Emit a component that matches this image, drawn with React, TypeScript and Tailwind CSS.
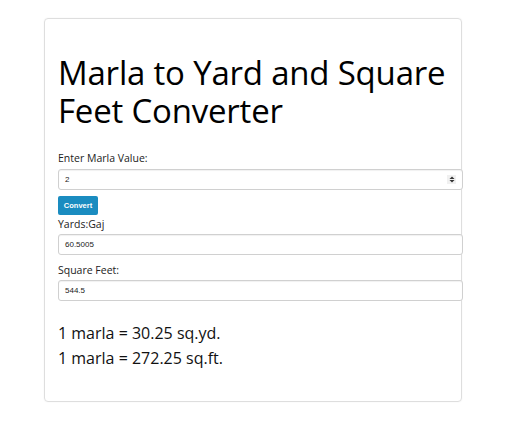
import React from "react";

function Field({ value, spinner }: { value: string; spinner?: boolean }) {
  return (
    <div className="relative flex h-[21px] w-[405px] items-center rounded-[3px] border border-[#d0d0d0] bg-white pl-[6px] shadow-[inset_0_1px_1px_rgba(0,0,0,0.06)]">
      <span className="text-[8px] leading-none text-[#222]" style={{ fontFamily: '"Liberation Sans", Arial, sans-serif' }}>
        {value}
      </span>
      {spinner && (
        <div className="absolute right-[6px] top-[5px] flex h-[9px] w-[9px] items-center justify-center bg-[#f0f0f0]">
          <svg width="6" height="7" viewBox="0 0 6 7">
            <path d="M3 0.5 L5.5 3 L0.5 3 Z" fill="#333" />
            <path d="M3 6.5 L5.5 4 L0.5 4 Z" fill="#333" />
          </svg>
        </div>
      )}
    </div>
  );
}

export default function App() {
  return (
    <div className="min-h-[428px] w-[513px] bg-white" style={{ fontFamily: '"Open Sans", "Noto Sans", sans-serif' }}>
      <div className="ml-[44px] mt-[18px] h-[384px] w-[418px] rounded-[4px] border border-[#dedede] pl-[13px] pt-[35px] shadow-[0_0_2px_rgba(0,0,0,0.05)]">
        <h1 className="text-[33px] font-normal leading-[38px] tracking-[-0.2px] text-black">
          Marla to Yard and Square Feet Converter
        </h1>
        <div className="mt-[20px] text-[10.5px] leading-[16px] text-[#222]">Enter Marla Value:</div>
        <div className="mt-[3px]">
          <Field value="2" spinner />
        </div>
        <button
          className="mt-[6px] flex h-[19px] w-[40px] items-center justify-center rounded-[2px] bg-[#1a8cc0] text-[7.5px] font-bold text-white"
          style={{ fontFamily: '"Liberation Sans", Arial, sans-serif' }}
        >
          Convert
        </button>
        <div className="mt-[1px] text-[10.5px] leading-[16px] text-[#222]">Yards:Gaj</div>
        <div className="mt-[2px]">
          <Field value="60.5005" />
        </div>
        <div className="mt-[7px] text-[10.5px] leading-[16px] text-[#222]">Square Feet:</div>
        <div className="mt-[2px]">
          <Field value="544.5" />
        </div>
        <div className="mt-[20px] text-[16px] leading-[25px] text-[#111]">
          <div>1 marla = 30.25 sq.yd.</div>
          <div>1 marla = 272.25 sq.ft.</div>
        </div>
      </div>
    </div>
  );
}
